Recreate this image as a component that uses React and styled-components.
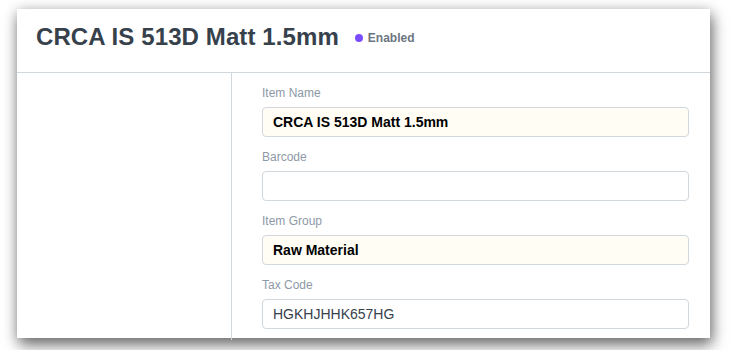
import React from "react";
import styled, { createGlobalStyle } from "styled-components";

const Global = createGlobalStyle`
  html, body { margin: 0; padding: 0; background: #ffffff; }
  body { font-family: "Liberation Sans", Arial, Helvetica, sans-serif; overflow: hidden; }
`;

const Stage = styled.div`
  width: 731px;
  height: 350px;
  padding: 9px 0 0 17px;
  box-sizing: border-box;
  overflow: hidden;
`;

const Window = styled.div`
  width: 693px;
  height: 329px;
  background: #fff;
  box-shadow: 2px 7px 14px rgba(0, 0, 0, 0.55), 0 0 12px rgba(0, 0, 0, 0.15);
  display: flex;
  flex-direction: column;
`;

const Header = styled.div`
  height: 64px;
  box-sizing: border-box;
  padding: 13px 19px 0;
  border-bottom: 1px solid #d1d8dd;
  display: flex;
  align-items: flex-start;
`;

const TitleRow = styled.div`
  display: flex;
  align-items: center;
  gap: 16px;
  height: 30px;
`;

const Title = styled.h1`
  margin: 0;
  font-size: 24px;
  line-height: 30px;
  font-weight: 700;
  color: #36414c;
  letter-spacing: 0.1px;
`;

const Status = styled.span`
  display: flex;
  align-items: center;
  gap: 5px;
  font-size: 12px;
  font-weight: 700;
  color: #6c7680;
  margin-top: 1px;
`;

const Dot = styled.span`
  width: 8px;
  height: 8px;
  border-radius: 50%;
  background: ${(p) => p.$color};
`;

const Body = styled.div`
  flex: 1;
  display: grid;
  grid-template-columns: 215px 1fr;
  min-height: 0;
`;

const Sidebar = styled.div`
  border-right: 1px solid #d1d8dd;
`;

const Form = styled.div`
  padding: 11px 21px 0 30px;
  display: flex;
  flex-direction: column;
`;

const Field = styled.div`
  display: flex;
  flex-direction: column;
  margin-bottom: 11px;
`;

const Label = styled.label`
  font-size: 12px;
  line-height: 18px;
  color: #8d99a6;
  margin-bottom: 5px;
`;

const Input = styled.div`
  height: 30px;
  box-sizing: border-box;
  border: 1px solid #d1d8dd;
  border-radius: 4px;
  background: ${(p) => (p.$bold ? "#fffdf4" : "#ffffff")};
  padding: 0 10px;
  display: flex;
  align-items: center;
  font-size: 14px;
  font-weight: ${(p) => (p.$bold ? 700 : 400)};
  color: ${(p) => (p.$bold ? "#000000" : "#36414c")};
`;

const fields = [
  { label: "Item Name", value: "CRCA IS 513D Matt 1.5mm", bold: true },
  { label: "Barcode", value: "" },
  { label: "Item Group", value: "Raw Material", bold: true },
  { label: "Tax Code", value: "HGKHJHHK657HG" },
];

export default function App() {
  return (
    <>
      <Global />
      <Stage>
        <Window>
          <Header>
            <TitleRow>
              <Title>CRCA IS 513D Matt 1.5mm</Title>
              <Status>
                <Dot $color="#7b4dff" />
                Enabled
              </Status>
            </TitleRow>
          </Header>
          <Body>
            <Sidebar />
            <Form>
              {fields.map((f) => (
                <Field key={f.label}>
                  <Label>{f.label}</Label>
                  <Input $bold={f.bold}>{f.value}</Input>
                </Field>
              ))}
            </Form>
          </Body>
        </Window>
      </Stage>
    </>
  );
}
